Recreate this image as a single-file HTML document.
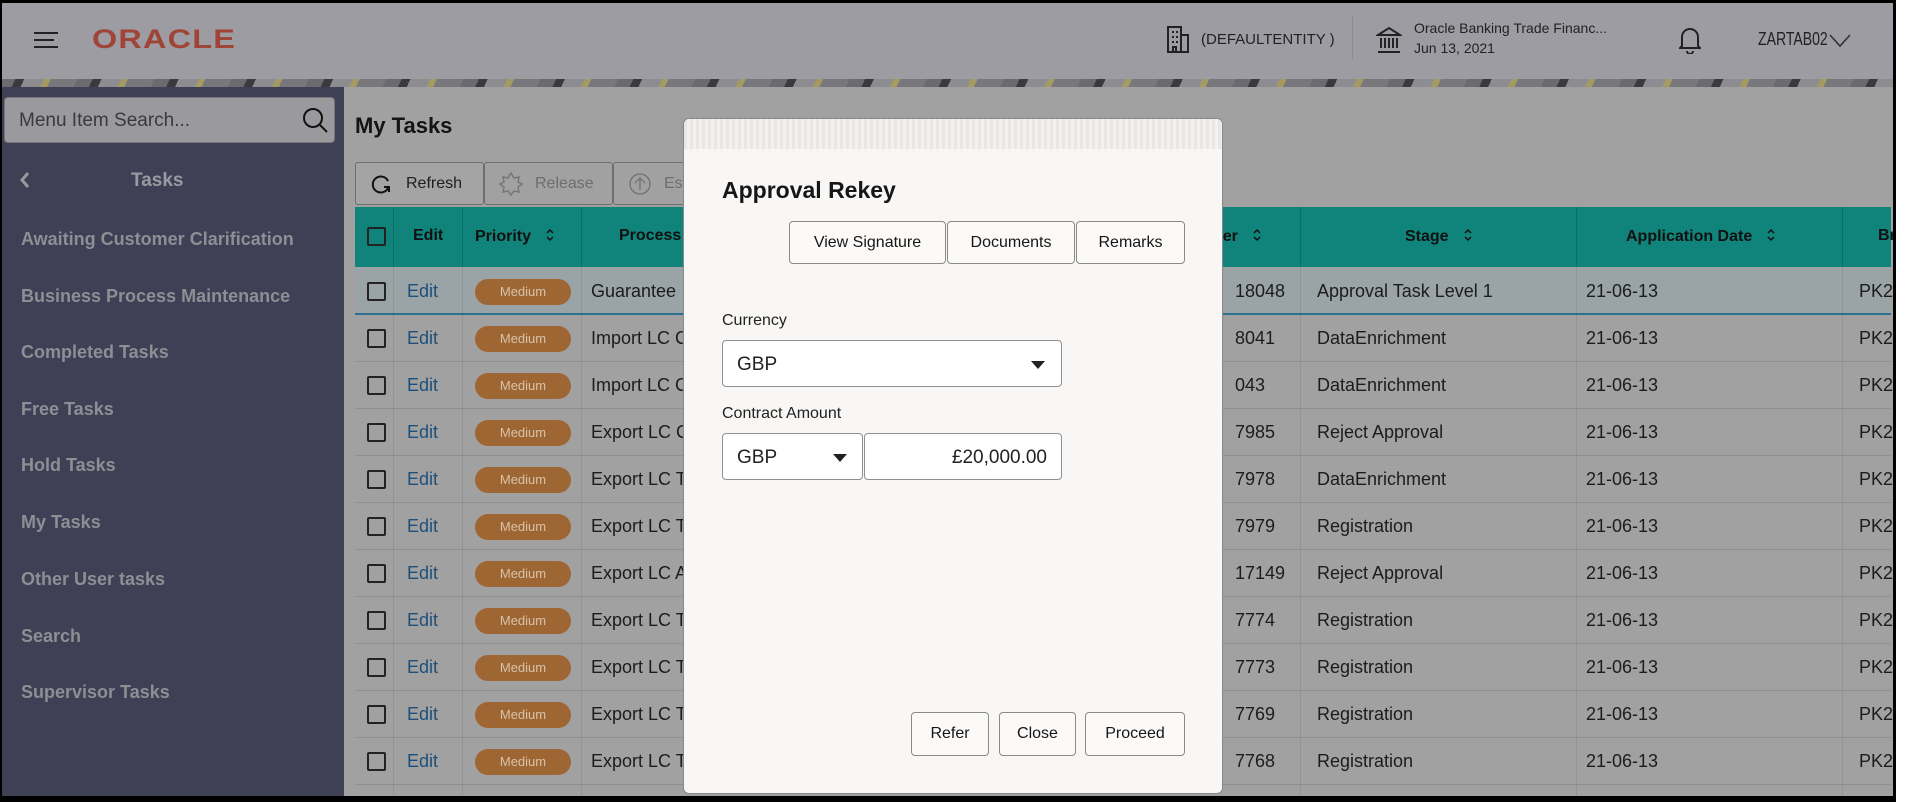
<!DOCTYPE html>
<html><head><meta charset="utf-8"><style>
*{box-sizing:border-box;margin:0;padding:0}
body{width:1910px;height:802px;overflow:hidden;background:#fff;font-family:"Liberation Sans",sans-serif;position:relative}
.frame{position:absolute;left:0;top:0;width:1896px;height:802px;overflow:hidden;background:#a2a2a2}
.abs{position:absolute}
.hdr{left:0;top:0;width:1893px;height:79px;background:#9d9ca3}
.strip{left:0;top:79px;width:1893px;height:8px;background:repeating-linear-gradient(115deg,#6a6a70 0 14px,#3a3a3e 14px 22px,#8d8c90 22px 40px,#a59a60 40px 46px,#77777c 46px 70px)}
.side{left:0;top:87px;width:344px;height:720px;background:#3f3f55}
.search{left:4px;top:97px;width:331px;height:46px;background:#9a9a9e;border-radius:4px;border:1px solid #777;font-size:19px;color:#3a3a3a;padding:12px 0 0 14px}
.mi{left:21px;font-size:18px;font-weight:bold;color:#8e8e94}
.main{left:344px;top:87px;width:1551px;height:720px;background:#a1a1a1}
.tb{top:162px;height:43px;border:1px solid #6f6f6f;border-radius:3px;font-size:16px;color:#1e1e1e;padding:12px 0 0 50px}
.th{left:355px;top:207px;width:1536px;height:60px;background:#10837a}
.row{left:355px;width:1536px;height:47px;border-bottom:1px solid #8f8f8f;background:#a1a1a1}
.vl{position:absolute;top:0;bottom:0;width:1px;background:#939393}
.cb{position:absolute;left:12px;top:14px;width:19px;height:19px;border:2px solid #222;border-radius:2px}
.t{position:absolute;font-size:18px;color:#1c1c1c;top:13px;white-space:nowrap}
.pill{position:absolute;left:120px;top:11px;width:96px;height:26px;border-radius:13px;background:#9e6633;color:#d8c2aa;font-size:13px;text-align:center;line-height:26px}
.hd{position:absolute;top:20px;font-size:16px;font-weight:bold;color:#111;white-space:nowrap}
.hd svg{margin-left:14px;vertical-align:-2px}
.dlg{left:683px;top:118px;width:540px;height:676px;background:#f8f7f5;border-radius:6px;border:1px solid #888;overflow:hidden}
.btn{position:absolute;border:1px solid #8a8a8a;border-radius:4px;background:#fbfaf9;font-size:16px;color:#161616;text-align:center}
.fld{position:absolute;border:1px solid #8f8f8f;border-radius:4px;background:#fff;font-size:19px;color:#222}
</style></head><body>
<div class="frame">
<div class="abs hdr">
  <div class="abs" style="left:34px;top:32px;width:24px;height:2px;background:#222"></div>
  <div class="abs" style="left:34px;top:39px;width:20px;height:2px;background:#222"></div>
  <div class="abs" style="left:34px;top:46px;width:24px;height:2px;background:#222"></div>
  <div class="abs" style="left:92px;top:24px;font-size:27px;font-weight:bold;color:#a04437;letter-spacing:1px;transform:scaleX(1.2);transform-origin:left">ORACLE</div>
  <svg class="abs" style="left:1167px;top:26px" width="22" height="27" viewBox="0 0 22 27" fill="none" stroke="#222" stroke-width="2"><rect x="1" y="1" width="13" height="25"/><rect x="14" y="9" width="7" height="17"/><path d="M5 6h2M9 6h2M5 11h2M9 11h2M5 16h2M9 16h2M6 26v-5h3v5"/></svg>
  <div class="abs" style="left:1201px;top:31px;font-size:15px;color:#222">(DEFAULTENTITY )</div>
  <div class="abs" style="left:1352px;top:15px;width:1px;height:44px;background:#8a8a90"></div>
  <svg class="abs" style="left:1376px;top:26px" width="26" height="28" viewBox="0 0 26 28" fill="none" stroke="#222" stroke-width="2"><path d="M2 9L13 2l11 7z"/><path d="M5 12v10M9 12v10M13 12v10M17 12v10M21 12v10M2 26h22"/></svg>
  <div class="abs" style="left:1414px;top:20px;font-size:14px;color:#222">Oracle Banking Trade Financ...</div>
  <div class="abs" style="left:1414px;top:40px;font-size:14px;color:#222">Jun 13, 2021</div>
  <svg class="abs" style="left:1679px;top:26px" width="22" height="28" viewBox="0 0 22 28" fill="none" stroke="#222" stroke-width="2"><path d="M3 20V11a8 8 0 0 1 16 0v9l2 2H1z"/><path d="M8 25a3 3 0 0 0 6 0"/></svg>
  <div class="abs" style="left:1758px;top:29px;font-size:18px;color:#222;transform:scaleX(0.78);transform-origin:left">ZARTAB02</div>
  <svg class="abs" style="left:1829px;top:34px" width="22" height="14" viewBox="0 0 22 14" fill="none" stroke="#333" stroke-width="1.6"><path d="M1 1l10 11L21 1"/></svg>
</div>
<div class="abs strip"></div>
<div class="abs side"></div>
<div class="abs search">Menu Item Search...
<svg class="abs" style="left:296px;top:8px" width="28" height="28" viewBox="0 0 28 28" fill="none" stroke="#111" stroke-width="2"><circle cx="12" cy="12" r="9"/><path d="M19 19l7 7"/></svg></div>
<svg class="abs" style="left:20px;top:171px" width="10" height="18" viewBox="0 0 10 18" fill="none" stroke="#999" stroke-width="3"><path d="M8 2L2 9l6 7"/></svg>
<div class="abs" style="left:131px;top:170px;font-size:19px;font-weight:bold;color:#9a9aa2">Tasks</div>
<div class="abs mi" style="top:229px">Awaiting Customer Clarification</div>
<div class="abs mi" style="top:286px">Business Process Maintenance</div>
<div class="abs mi" style="top:342px">Completed Tasks</div>
<div class="abs mi" style="top:399px">Free Tasks</div>
<div class="abs mi" style="top:455px">Hold Tasks</div>
<div class="abs mi" style="top:512px">My Tasks</div>
<div class="abs mi" style="top:569px">Other User tasks</div>
<div class="abs mi" style="top:626px">Search</div>
<div class="abs mi" style="top:682px">Supervisor Tasks</div>

<div class="abs main"></div>
<div class="abs" style="left:355px;top:113px;font-size:22px;font-weight:bold;color:#141414">My Tasks</div>
<div class="abs tb" style="left:355px;width:129px;background:#a4a4a4">Refresh
<svg class="abs" style="left:14px;top:10px" width="22" height="22" viewBox="0 0 22 22" fill="none" stroke="#111" stroke-width="2"><path d="M18 8A8 8 0 1 0 18 15"/><path d="M14 14h5v5"/></svg></div>
<div class="abs tb" style="left:484px;width:129px;color:#6e6e6e">Release
<svg class="abs" style="left:14px;top:9px" width="24" height="24" viewBox="0 0 24 24" fill="none" stroke="#777" stroke-width="1.5"><path d="M12 1l3 5 5-1-1 5 4 2-4 3 1 5-5-1-3 4-3-4-5 1 1-5-4-3 4-2-1-5 5 1z"/></svg></div>
<div class="abs tb" style="left:613px;width:90px;color:#6e6e6e">Es
<svg class="abs" style="left:14px;top:9px" width="24" height="24" viewBox="0 0 24 24" fill="none" stroke="#777" stroke-width="1.5"><circle cx="12" cy="12" r="10"/><path d="M12 18V6M7 11l5-5 5 5"/></svg></div>

<div class="abs th">
 <div class="cb" style="top:20px"></div>
 <div class="vl" style="left:38px;background:#0b6f67"></div><div class="vl" style="left:107px;background:#0b6f67"></div><div class="vl" style="left:226px;background:#0b6f67"></div><div class="vl" style="left:945px;background:#0b6f67"></div><div class="vl" style="left:1221px;background:#0b6f67"></div><div class="vl" style="left:1487px;background:#0b6f67"></div>
 <div class="hd" style="left:58px">Edit</div>
 <div class="hd" style="left:120px">Priority<svg width="10" height="16" viewBox="0 0 10 16" fill="none" stroke="#111" stroke-width="1.5"><path d="M2 6l3-3 3 3M2 10l3 3 3-3"/></svg></div>
 <div class="hd" style="left:264px">Process Name</div>
 <div class="hd" style="left:858px">ber<svg width="10" height="16" viewBox="0 0 10 16" fill="none" stroke="#111" stroke-width="1.5"><path d="M2 6l3-3 3 3M2 10l3 3 3-3"/></svg></div>
 <div class="hd" style="left:1050px">Stage<svg width="10" height="16" viewBox="0 0 10 16" fill="none" stroke="#111" stroke-width="1.5"><path d="M2 6l3-3 3 3M2 10l3 3 3-3"/></svg></div>
 <div class="hd" style="left:1271px">Application Date<svg width="10" height="16" viewBox="0 0 10 16" fill="none" stroke="#111" stroke-width="1.5"><path d="M2 6l3-3 3 3M2 10l3 3 3-3"/></svg></div>
 <div class="hd" style="left:1523px">Br</div>
</div>
<div id="rows"></div>

<div class="abs dlg">
 <div class="abs" style="left:0;top:0;width:540px;height:30px;background:repeating-linear-gradient(90deg,#e8e7e5 0 3px,#f3f2f0 3px 6px)"></div>
 <div class="abs" style="left:38px;top:58px;font-size:23px;font-weight:bold;color:#161616">Approval Rekey</div>
 <div class="btn" style="left:105px;top:102px;width:157px;height:43px;line-height:41px">View Signature</div>
 <div class="btn" style="left:263px;top:102px;width:128px;height:43px;line-height:41px">Documents</div>
 <div class="btn" style="left:392px;top:102px;width:109px;height:43px;line-height:41px">Remarks</div>
 <div class="abs" style="left:38px;top:193px;font-size:16px;color:#222">Currency</div>
 <div class="fld" style="left:38px;top:221px;width:340px;height:47px;padding:13px 0 0 14px">GBP<div class="abs" style="left:308px;top:20px;border:7px solid transparent;border-top:8px solid #222;border-bottom:0"></div></div>
 <div class="abs" style="left:38px;top:286px;font-size:16px;color:#222">Contract Amount</div>
 <div class="fld" style="left:38px;top:314px;width:141px;height:47px;padding:13px 0 0 14px">GBP<div class="abs" style="left:110px;top:20px;border:7px solid transparent;border-top:8px solid #222;border-bottom:0"></div></div>
 <div class="fld" style="left:180px;top:314px;width:198px;height:47px;padding:13px 14px 0 0;text-align:right">£20,000.00</div>
 <div class="btn" style="left:227px;top:593px;width:78px;height:44px;line-height:42px">Refer</div>
 <div class="btn" style="left:315px;top:593px;width:77px;height:44px;line-height:42px">Close</div>
 <div class="btn" style="left:401px;top:593px;width:100px;height:44px;line-height:42px">Proceed</div>
</div>
</div>
<div class="abs" style="left:0;top:0;width:1896px;height:3px;background:#000"></div>
<div class="abs" style="left:0;top:0;width:2px;height:802px;background:#000"></div>
<div class="abs" style="left:1893px;top:0;width:3px;height:802px;background:#000"></div>
<div class="abs" style="left:0;top:796px;width:1896px;height:6px;background:#000"></div>
<script>
var d=[["Guarantee ","18048","Approval Task Level 1"],["Import LC C","8041","DataEnrichment"],["Import LC C","043","DataEnrichment"],["Export LC C","7985","Reject Approval"],["Export LC T","7978","DataEnrichment"],["Export LC T","7979","Registration"],["Export LC A","17149","Reject Approval"],["Export LC T","7774","Registration"],["Export LC T","7773","Registration"],["Export LC T","7769","Registration"],["Export LC T","7768","Registration"],["","",""]];
var h="";
d.forEach(function(r,i){var top=268+i*47;var bg=i==0?"#9aa3a6":"#a1a1a1";var bb=i==0?"2px solid #2d6f8e":"1px solid #8f8f8f";
h+='<div class="abs row" style="top:'+top+'px;background:'+bg+';border-bottom:'+bb+'"><div class="vl" style="left:38px"></div><div class="vl" style="left:107px"></div><div class="vl" style="left:226px"></div><div class="vl" style="left:945px"></div><div class="vl" style="left:1221px"></div><div class="vl" style="left:1487px"></div>';
if(r[0]){h+='<div class="cb"></div><div class="t" style="left:52px;color:#1d4f7a">Edit</div><div class="pill">Medium</div><div class="t" style="left:236px">'+r[0]+'</div><div class="t" style="left:880px">'+r[1]+'</div><div class="t" style="left:962px">'+r[2]+'</div><div class="t" style="left:1231px">21-06-13</div><div class="t" style="left:1504px">PK2</div>';}
h+='</div>';});
document.getElementById("rows").outerHTML=h;
</script>
</body></html>
